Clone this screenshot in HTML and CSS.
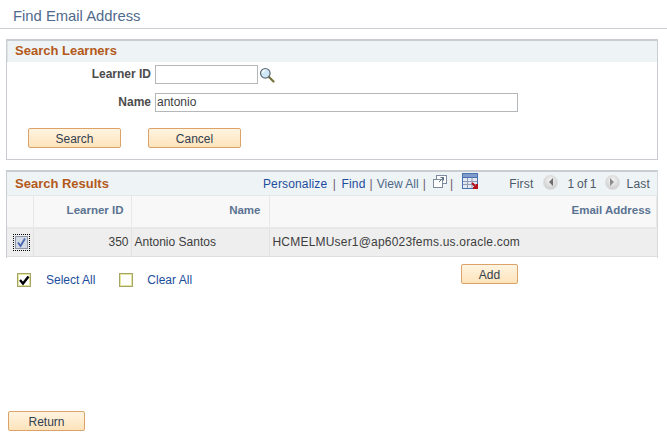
FILE: index.html
```html
<!DOCTYPE html>
<html lang="en">
<head>
    <meta charset="UTF-8">
    <title>Find Email Address</title>
    <link rel="stylesheet" href="styles.css">
</head>
<body>
    <h1 class="page-title">Find Email Address</h1>

    <section class="search-box">
        <h2 class="box-title">Search Learners</h2>
        <div class="form-row first-row">
            <label class="form-label" for="learnerId">Learner ID</label>
            <input class="text-input id-input" type="text" id="learnerId">
            <svg class="lookup-icon" width="16" height="16" viewBox="0 0 16 16">
                <path d="M9.5 9.5 L14.5 14.5" stroke="#77703a" stroke-width="2.2" stroke-linecap="round"/>
                <circle cx="6.3" cy="6.3" r="4.8" fill="#cfe8f7" stroke="#5f6a72" stroke-width="1.2"/>
                <path d="M3.6 6 A3 3 0 0 1 6.2 3.4" fill="none" stroke="#fff" stroke-width="1.2"/>
            </svg>
        </div>
        <div class="form-row">
            <label class="form-label" for="name">Name</label>
            <input class="text-input name-input" type="text" id="name" value="antonio">
        </div>
        <div class="search-buttons">
            <button class="btn search-btn">Search</button>
            <button class="btn search-btn">Cancel</button>
        </div>
    </section>

    <section class="results-box">
        <div class="results-head">
            <h2 class="box-title plain">Search Results</h2>
            <div class="grid-tools">
                <a class="link" href="#">Personalize</a>
                <span class="sep wide">|</span>
                <a class="link" href="#">Find</a>
                <span class="sep">|</span>
                <a class="muted-link" href="#">View All</a>
                <span class="sep">|</span>
                <svg class="tool-icon" width="16" height="15" viewBox="0 0 16 15">
                    <rect x="4.5" y="1.5" width="10" height="8" fill="#fff" stroke="#7d8c9c"/>
                    <rect x="1.5" y="5.5" width="9" height="8" fill="#fff" stroke="#7d8c9c"/>
                    <path d="M7 8 L11.5 3.5 M8.5 3.5 H11.5 V6.5" fill="none" stroke="#5d7185"/>
                </svg>
                <span class="sep">|</span>
                <svg class="grid-icon" width="17" height="17" viewBox="0 0 17 17">
                    <rect width="16" height="16" fill="#4a72b0"/>
                    <rect y="1" x="1" width="14" height="3" fill="#7f9ccb"/>
                    <path d="M1 5 H15 V15 H1 Z" fill="#e4e8f0"/>
                    <path d="M1 8.5 H15 M1 11.5 H15 M5.5 5 V15 M10 5 V15" stroke="#8f9cb3"/>
                    <path d="M10 10 L15 15 M15 11 V15 H11" fill="none" stroke="#b5121b" stroke-width="2"/>
                </svg>
            </div>
            <div class="pager">
                <span>First</span>
                <span class="round-btn prev-btn"><i class="arrow-left"></i></span>
                <span class="page-count">1 of 1</span>
                <span class="round-btn next-btn"><i class="arrow-right"></i></span>
                <span>Last</span>
            </div>
        </div>
        <table class="results-table">
            <thead>
                <tr>
                    <th class="col-check"></th>
                    <th class="col-id">Learner ID</th>
                    <th class="col-name">Name</th>
                    <th class="col-email">Email Address</th>
                </tr>
            </thead>
            <tbody>
                <tr>
                    <td class="col-check"><span class="row-check"><svg width="13" height="13" viewBox="0 0 13 13"><rect x="0.5" y="0.5" width="12" height="12" fill="#d5dbe6" stroke="#8e97a5"/><path d="M3 6.5 L5.5 10 L10 2.5" fill="none" stroke="#4a68ad" stroke-width="1.8"/></svg></span></td>
                    <td class="num">350</td>
                    <td class="name-cell">Antonio Santos</td>
                    <td class="email-cell">HCMELMUser1@ap6023fems.us.oracle.com</td>
                </tr>
            </tbody>
        </table>
    </section>

    <div class="select-row">
        <a class="select-link" href="#">
            <svg width="14" height="14" viewBox="0 0 14 14"><rect x="0.5" y="0.5" width="13" height="13" fill="#fff" stroke="#a5a56a"/><rect x="1.5" y="1.5" width="11" height="11" fill="none" stroke="#e4e49a"/><path d="M3 7 L6 10.5 L11.5 3.5" fill="none" stroke="#000" stroke-width="2.4"/></svg>
            Select All
        </a>
        <a class="select-link clear-link" href="#">
            <svg width="14" height="14" viewBox="0 0 14 14"><rect x="0.5" y="0.5" width="13" height="13" fill="#fff" stroke="#a5a56a"/><rect x="1.5" y="1.5" width="11" height="11" fill="none" stroke="#e4e49a"/></svg>
            Clear All
        </a>
        <button class="btn add-btn">Add</button>
    </div>

    <button class="btn return-btn">Return</button>
</body>
</html>
```

FILE: styles.css
```css
body {
    margin: 0;
    height: 437px;
    overflow: hidden;
    position: relative;
    background: #fff;
    font-family: "Liberation Sans", Arial, sans-serif;
    font-size: 12px;
    color: #3d3d3d;
}
.page-title {
    margin: 0;
    height: 29px;
    padding: 8px 0 0 13px;
    box-sizing: border-box;
    font-size: 14.8px;
    font-weight: normal;
    line-height: 17px;
    color: #4f6a8c;
    border-bottom: 1px solid #ccd0d4;
}
.search-box {
    margin: 10px 9px 0 6px;
    height: 121px;
    box-sizing: border-box;
    border: 1px solid #c9cdd1;
    border-top-width: 2px;
}
.box-title {
    margin: 0;
    height: 21px;
    padding-left: 7px;
    font-size: 13px;
    line-height: 20px;
    font-weight: bold;
    color: #b3591b;
    background: #eef3f5;
    border-left: 1px solid #dfe3e6;
}
.box-title.plain {
    background: none;
    border: 0;
    height: auto;
    padding-left: 8px;
    line-height: 23px;
}
.form-row {
    display: flex;
    align-items: center;
    height: 20px;
    margin-top: 8px;
}
.first-row {
    margin-top: 2px;
}
.form-label {
    width: 148px;
    padding-right: 4px;
    box-sizing: border-box;
    text-align: right;
    font-weight: bold;
    color: #4c4c4c;
}
.text-input {
    height: 19px;
    box-sizing: border-box;
    padding: 0 1px;
    border: 1px solid #b5b8ba;
    font: 12px "Liberation Sans", Arial, sans-serif;
    color: #3d3d3d;
    background: #fff;
}
.id-input {
    width: 103px;
}
.name-input {
    width: 363px;
}
.lookup-icon {
    margin-left: 1px;
    margin-top: 1px;
}
.search-buttons {
    display: flex;
    gap: 27px;
    margin: 16px 0 0 21px;
}
.btn {
    display: block;
    height: 20px;
    padding: 1px 0 0;
    box-sizing: border-box;
    border: 1px solid #dba36a;
    border-radius: 2px;
    background: linear-gradient(#fff4e0, #fde3bb);
    font: 12px "Liberation Sans", Arial, sans-serif;
    color: #33404f;
}
.search-btn {
    width: 93px;
}
.results-box {
    margin: 10px 9px 0 6px;
    height: 88px;
    box-sizing: border-box;
    border-top: 2px solid #c9cdd1;
    border-left: 1px solid #c9cdd1;
    border-right: 1px solid #d8dbde;
}
.results-head {
    display: flex;
    align-items: center;
    height: 23px;
    background: #eef3f5;
}
.grid-tools {
    display: flex;
    align-items: center;
    margin-left: 154px;
    letter-spacing: 0.15px;
}
.link, .select-link {
    color: #1c4d9c;
    text-decoration: none;
}
.muted-link {
    color: #4d6787;
    letter-spacing: 0;
    text-decoration: none;
}
.sep {
    margin: 0 4px;
    color: #6f5a70;
}
.sep.wide {
    margin: 0 5.5px;
}
.tool-icon {
    margin: -5px -2px 0 2px;
}
.grid-icon {
    margin-left: 5px;
    margin-top: -5px;
}
.pager {
    display: flex;
    align-items: center;
    gap: 8px;
    margin-left: auto;
    padding-right: 7px;
    letter-spacing: 0.2px;
    color: #4c5a68;
}
.page-count {
    letter-spacing: 0;
    word-spacing: -0.5px;
}
.prev-btn {
    margin-left: 2px;
    margin-right: 1px;
}
.next-btn {
    margin-right: -1px;
}
.round-btn {
    display: flex;
    align-items: center;
    justify-content: center;
    width: 15px;
    height: 15px;
    margin-top: -3px;
    border-radius: 50%;
    background: radial-gradient(circle at 50% 35%, #f6f6f6, #c4c4c4);
    border: 1px solid #dcdcdc;
    box-sizing: border-box;
}
.arrow-left {
    border-right: 4px solid #6d6d6d;
    border-top: 4px solid transparent;
    border-bottom: 4px solid transparent;
}
.arrow-right {
    border-left: 4px solid #8d8d8d;
    border-top: 4px solid transparent;
    border-bottom: 4px solid transparent;
}
.results-table {
    width: 100%;
    border-collapse: collapse;
    table-layout: fixed;
}
.results-table th {
    height: 32px;
    padding: 0 7px 2px 0;
    box-sizing: border-box;
    text-align: right;
    font-size: 11.5px;
    font-weight: bold;
    color: #5a7391;
    background: #f8f8f8;
    border: 2px solid #e8e8e8;
    border-top: 1px solid #e8e8e8;
    border-left: 0;
    border-right-width: 1px;
}
.results-table th.col-name {
    padding-right: 8px;
}
.results-table th.col-email {
    padding-right: 5px;
}
.results-table td {
    height: 29px;
    padding: 0;
    box-sizing: border-box;
    background: #eeeeee;
    border-right: 1px solid #e2e2e2;
    border-bottom: 1px solid #dedede;
}
.col-check {
    width: 26px;
}
.col-id {
    width: 98px;
}
.col-name {
    width: 138px;
}
.row-check {
    display: block;
    width: 13px;
    height: 13px;
    margin-left: 7px;
    padding: 1px;
    outline: 1px dotted #000;
    box-sizing: content-box;
}
.row-check svg {
    display: block;
}
.results-table td.num {
    text-align: right;
    padding-right: 2px;
}
.results-table td.name-cell {
    padding-left: 3px;
}
.results-table td.email-cell {
    padding-left: 3px;
    letter-spacing: 0.2px;
    border-right: 0;
}
.select-row {
    display: flex;
    align-items: center;
    height: 20px;
    margin-top: 12px;
    padding-left: 17px;
}
.select-link {
    display: flex;
    align-items: center;
    gap: 15px;
    margin-right: 24px;
}
.clear-link {
    gap: 14px;
}
.add-btn {
    width: 57px;
    margin-left: 245px;
    margin-top: -12px;
}
.return-btn {
    position: absolute;
    left: 8px;
    top: 411px;
    width: 77px;
}
```
